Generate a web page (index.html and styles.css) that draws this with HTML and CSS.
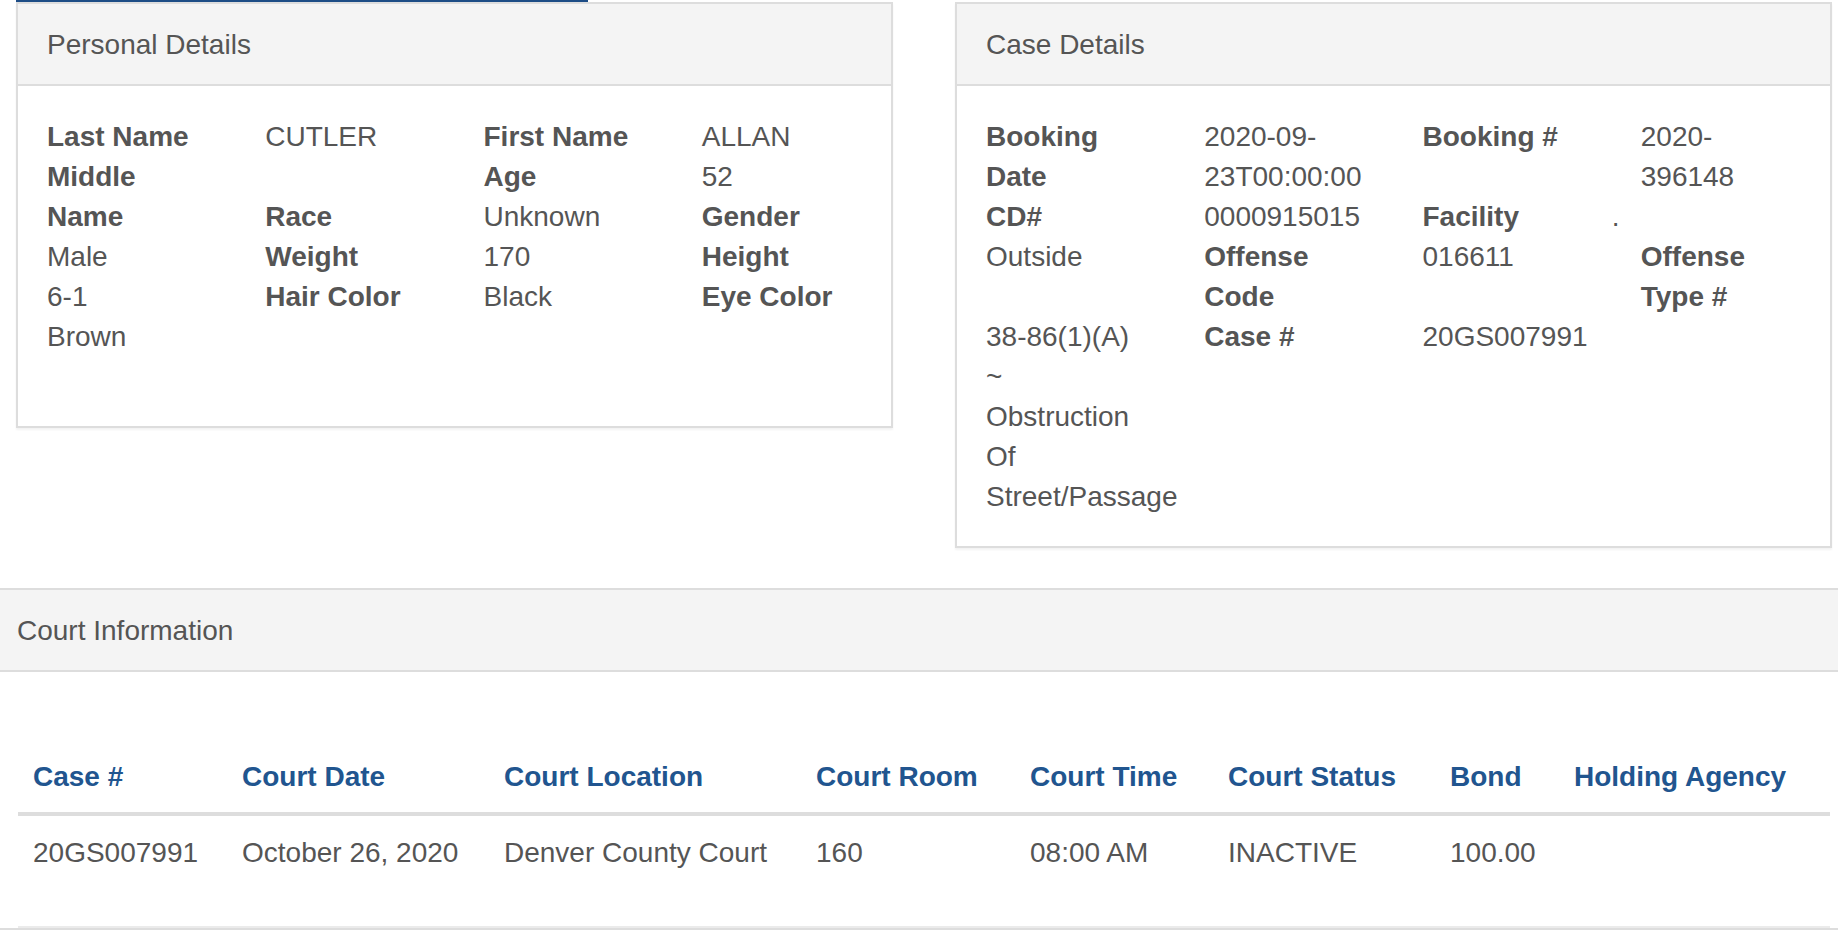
FILE: index.html
```html
<!DOCTYPE html>
<html lang="en">
<head>
<meta charset="utf-8">
<title>Inmate Details</title>
<link rel="stylesheet" href="styles.css">
</head>
<body>
<div class="tabbar"><div class="tab-active"></div></div>

<div class="panels">
  <section class="panel panel-half">
    <div class="panel-heading">Personal Details</div>
    <div class="panel-body panel-body-extra">
      <div class="grid">
        <div class="cell label">Last Name</div>
        <div class="cell">CUTLER</div>
        <div class="cell label">First Name</div>
        <div class="cell">ALLAN</div>
        <div class="cell label">Middle Name</div>
        <div class="cell"></div>
        <div class="cell label">Age</div>
        <div class="cell">52</div>
        <div class="cell label">Race</div>
        <div class="cell">Unknown</div>
        <div class="cell label">Gender</div>
        <div class="cell">Male</div>
        <div class="cell label">Weight</div>
        <div class="cell">170</div>
        <div class="cell label">Height</div>
        <div class="cell">6-1</div>
        <div class="cell label">Hair Color</div>
        <div class="cell">Black</div>
        <div class="cell label">Eye Color</div>
        <div class="cell">Brown</div>
      </div>
    </div>
  </section>

  <section class="panel panel-half">
    <div class="panel-heading">Case Details</div>
    <div class="panel-body">
      <div class="grid">
        <div class="cell label">Booking Date</div>
        <div class="cell">2020-09-<wbr>23T00:00:00</div>
        <div class="cell label">Booking #</div>
        <div class="cell">2020-<wbr>396148</div>
        <div class="cell label">CD#</div>
        <div class="cell">0000915015</div>
        <div class="cell label">Facility</div>
        <div class="cell cell-dot">.</div>
        <div class="cell">Outside</div>
        <div class="cell label">Offense Code</div>
        <div class="cell">016611</div>
        <div class="cell label">Offense Type #</div>
        <div class="cell">38-86(1)(A) ~ Obstruction Of Street/Passage</div>
        <div class="cell label">Case #</div>
        <div class="cell">20GS007991</div>
      </div>
    </div>
  </section>
</div>

<section class="panel panel-full">
  <div class="panel-heading panel-heading-flush">Court Information</div>
  <div class="panel-body panel-body-table">
    <table class="court-table">
      <colgroup>
        <col class="c1"><col class="c2"><col class="c3"><col class="c4">
        <col class="c5"><col class="c6"><col class="c7"><col class="c8">
      </colgroup>
      <thead>
        <tr>
          <th>Case #</th>
          <th>Court Date</th>
          <th>Court Location</th>
          <th>Court Room</th>
          <th>Court Time</th>
          <th>Court Status</th>
          <th>Bond</th>
          <th>Holding Agency</th>
        </tr>
      </thead>
      <tbody>
        <tr>
          <td>20GS007991</td>
          <td>October 26, 2020</td>
          <td>Denver County Court</td>
          <td>160</td>
          <td>08:00 AM</td>
          <td>INACTIVE</td>
          <td>100.00</td>
          <td></td>
        </tr>
      </tbody>
    </table>
  </div>
</section>
</body>
</html>
```

FILE: styles.css
```css
* { box-sizing: border-box; }

html, body {
  margin: 0;
  padding: 0;
  background: #ffffff;
}

body {
  font-family: "Liberation Sans", Arial, Helvetica, sans-serif;
  font-size: 28px;
  line-height: 40px;
  color: #555555;
  width: 1838px;
  overflow: hidden;
}

.tabbar {
  height: 2px;
  padding-left: 16px;
}

.tab-active {
  width: 572px;
  height: 2px;
  background: #1d4d86;
}

.panels {
  display: flex;
  align-items: flex-start;
  gap: 62px;
  padding-left: 16px;
}

.panel {
  background: #ffffff;
  border: 2px solid #dddddd;
  box-shadow: 0 2px 2px rgba(0, 0, 0, 0.05);
  margin-bottom: 40px;
}

.panel-half {
  width: 877px;
  flex: 0 0 877px;
}

.panel-heading {
  background: #f4f4f4;
  border-bottom: 2px solid #dddddd;
  padding: 21px 30px 19px 29px;
  color: #555555;
  font-weight: normal;
}

.panel-body {
  padding: 31px 30px 29px;
}

.panel-body-extra {
  padding-bottom: 69px;
}

.grid {
  display: flow-root;
  margin: 0 -30px;
}

.cell {
  float: left;
  width: 25%;
  min-height: 1px;
  padding: 0 31px 0 29px;
}

.cell-dot {
  text-indent: -29px;
}

.label {
  font-weight: bold;
}

.panel-full {
  width: 1838px;
  border-left: 0;
  border-right: 0;
  box-shadow: none;
}

.panel-heading-flush {
  padding-left: 17px;
}

.panel-body-table {
  padding: 68px 8px 0 18px;
}

.court-table {
  width: 1812px;
  border-collapse: collapse;
  table-layout: fixed;
}

.c1 { width: 209px; }
.c2 { width: 262px; }
.c3 { width: 312px; }
.c4 { width: 214px; }
.c5 { width: 198px; }
.c6 { width: 222px; }
.c7 { width: 124px; }
.c8 { width: 271px; }

.court-table th {
  text-align: left;
  font-weight: bold;
  color: #21558f;
  padding: 17px 16px 15px 15px;
  border-bottom: 4px solid #dddddd;
  vertical-align: bottom;
  white-space: nowrap;
}

.court-table td {
  padding: 17px 16px 53px 15px;
  vertical-align: top;
  border-bottom: 2px solid #ebebeb;
  white-space: nowrap;
}
```
